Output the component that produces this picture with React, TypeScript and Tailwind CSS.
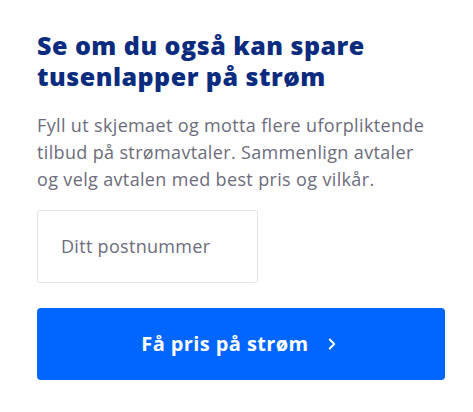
import { ChevronRight } from "lucide-react";

export default function App() {
  return (
    <div
      className="w-[473px] h-[412px] bg-white pl-[37px] pr-[28px] pt-[30px]"
      style={{ fontFamily: "'Open Sans', 'Noto Sans', sans-serif" }}
    >
      <h2 className="text-[25px] leading-[31px] font-extrabold text-[#0b2b7f] tracking-[0.5px]">
        Se om du også kan spare
        <br />
        tusenlapper på strøm
      </h2>

      <p className="mt-[20px] text-[18px] leading-[27px] text-[#6c6c7c] tracking-[0.35px]">
        Fyll ut skjemaet og motta flere uforpliktende
        <br />
        tilbud på strømavtaler. Sammenlign avtaler
        <br />
        og velg avtalen med best pris og vilkår.
      </p>

      <div className="mt-[17px] w-[221px] h-[73px] border border-[#e3e3ea] rounded-[3px] flex items-center px-[23px]">
        <input
          type="text"
          placeholder="Ditt postnummer"
          className="w-full outline-none text-[18px] tracking-[0.3px] text-[#6c6c7c] placeholder:text-[#6c6c7c] bg-transparent"
        />
      </div>

      <button className="mt-[25px] w-[408px] h-[72px] rounded-[4px] bg-[#0066ff] text-white flex items-center justify-center gap-[14px] text-[20px] font-bold tracking-[0.4px]">
        <span>Få pris på strøm</span>
        <ChevronRight size={18} strokeWidth={2.5} />
      </button>
    </div>
  );
}
